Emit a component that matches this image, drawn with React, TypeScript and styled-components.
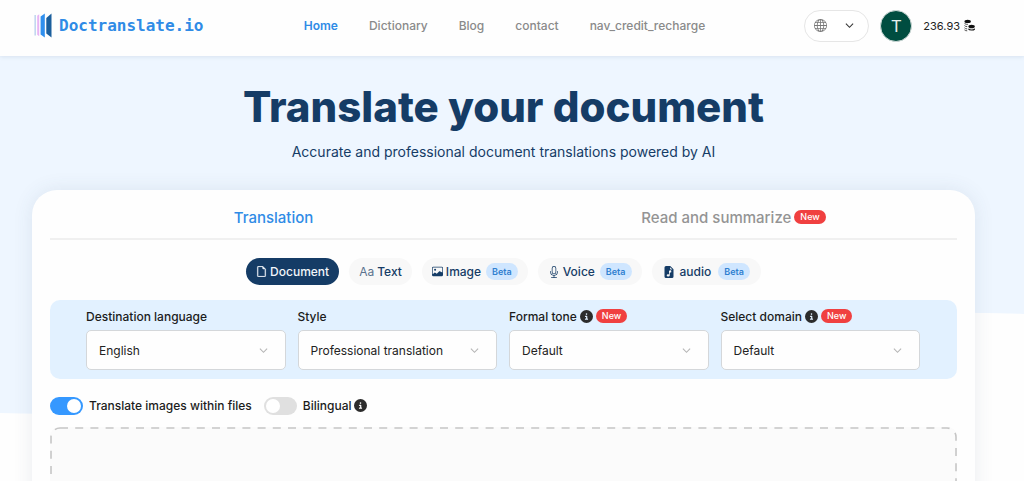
import React from "react";
import styled, { createGlobalStyle } from "styled-components";
import { BsFileEarmark, BsFileEarmarkMusicFill, BsGlobe, BsImage, BsMic } from "react-icons/bs";
import { FaCircleInfo } from "react-icons/fa6";

const GlobalStyle = createGlobalStyle`
  * { box-sizing: border-box; }
  body { margin: 0; background: #fefefe; font-family: Inter, "Liberation Sans", sans-serif; }
  button, select, input { font: inherit; color: inherit; margin: 0; }
`;

const Page = styled.div`
  position: relative;
  height: 100vh;
  overflow: hidden;
  isolation: isolate;
`;

const Wave = styled.svg`
  position: absolute;
  inset: 56px 0 auto;
  width: 100%;
  height: 358px;
  z-index: -1;
`;

const Header = styled.header`
  display: grid;
  grid-template-columns: 1fr auto 1fr;
  align-items: center;
  height: 56px;
  padding: 0 49px 5px 34px;
  background: #fefefe;
  box-shadow: 0 1px 4px rgba(60, 90, 130, 0.12);
`;

const Logo = styled.a`
  display: flex;
  align-items: center;
  gap: 7px;
  color: #2f8be6;
  font: bold 16px/24px "DejaVu Sans Mono", monospace;
  text-decoration: none;
`;

const Nav = styled.nav`
  display: flex;
  gap: 31px;
`;

const NavLink = styled.a<{ $active?: boolean }>`
  color: ${(p) => (p.$active ? "#2f8be6" : "#8a8a8a")};
  font-size: 12px;
  font-weight: ${(p) => (p.$active ? 600 : 500)};
  line-height: 20px;
  text-decoration: none;
`;

const Account = styled.div`
  display: flex;
  align-items: center;
  justify-content: flex-end;
  gap: 11px;
`;

const LanguageButton = styled.button`
  display: flex;
  align-items: center;
  justify-content: space-between;
  width: 65px;
  height: 32px;
  padding: 0 14px 0 9px;
  border: 1px solid #e6e6e6;
  border-radius: 16px;
  background: #fff;
  color: #777;

  > svg:last-child { color: #333; }
`;

const Avatar = styled.button`
  width: 32px;
  height: 32px;
  padding: 0;
  border: 1px solid #cfdad8;
  border-radius: 50%;
  background: #004d40;
  color: #e6f0ee;
  font: 17px/30px Roboto, sans-serif;
`;

const Credits = styled.span`
  display: flex;
  align-items: center;
  gap: 4px;
  color: #222;
  font-size: 11px;
  line-height: 16px;
`;

const Main = styled.main`
  padding: 0 49px 0 32px;
`;

const Title = styled.h1`
  margin: 24px 0 0;
  color: #153c66;
  font-size: 42px;
  font-weight: 800;
  line-height: 54px;
  text-align: center;
`;

const Subtitle = styled.p`
  margin: 8px 0 28px;
  color: #153c66;
  font-size: 14px;
  font-weight: 400;
  line-height: 20px;
  text-align: center;
`;

const Card = styled.section`
  padding: 8px 18px;
  border-radius: 25px;
  background: #fefefe;
  box-shadow: 0 0 20px rgba(60, 80, 110, 0.1);
`;

const Tabs = styled.div`
  display: grid;
  grid-template-columns: 1fr 1fr;
  gap: 13px;
  border-bottom: 2px solid #f0f0f0;
`;

const Tab = styled.button<{ $active?: boolean }>`
  display: flex;
  align-items: center;
  justify-content: center;
  gap: 3px;
  height: 40px;
  padding: 0 0 2px;
  border: 0;
  background: none;
  color: ${(p) => (p.$active ? "#2f8be6" : "#949494")};
  font-size: 15px;
  font-weight: 500;
`;

const NewBadge = styled.span`
  padding: 0 6px;
  border-radius: 7px;
  background: #f04040;
  color: #fff;
  font-size: 9px;
  font-weight: 500;
  line-height: 14px;
`;

const Modes = styled.div`
  display: flex;
  justify-content: center;
  gap: 10px;
  margin: 18px 0 15px;
`;

const Mode = styled.button<{ $active?: boolean; $roomy?: boolean }>`
  display: flex;
  align-items: center;
  gap: ${(p) => (p.$roomy ? 5 : 3)}px;
  height: 27px;
  padding: 0 ${(p) => (p.$roomy ? 11 : 10)}px;
  border: 0;
  border-radius: 14px;
  background: ${(p) => (p.$active ? "#153c66" : "#f8f8f8")};
  color: ${(p) => (p.$active ? "#f2f6fa" : "#153c66")};
  font-size: 12px;
  font-weight: 500;
`;

const Aa = styled.span`
  color: #5b738f;
  font-weight: 400;
`;

const BetaBadge = styled.span`
  margin-left: 2px;
  padding: 0 6px;
  border-radius: 9px;
  background: #cfe6ff;
  color: #2f80d0;
  font-size: 9px;
  font-weight: 600;
  line-height: 17px;
`;

const Options = styled.div`
  display: grid;
  grid-template-columns: repeat(4, 1fr);
  gap: 12px;
  padding: 8px 37px 9px 36px;
  border-radius: 10px;
  background: #e2f1ff;
`;

const FieldLabel = styled.div`
  display: flex;
  align-items: center;
  gap: 3px;
  height: 16px;
  margin-bottom: 6px;
  color: #1c1c1c;
  font-size: 12px;
  font-weight: 500;
`;

const SelectBox = styled.div`
  display: grid;
  align-items: center;

  > * { grid-area: 1 / 1; }
  > svg { justify-self: end; margin-right: 18px; color: #b5b5b5; pointer-events: none; }
`;

const Select = styled.select`
  appearance: none;
  width: 100%;
  height: 40px;
  padding: 0 36px 0 12px;
  border: 1px solid #d4d7da;
  border-radius: 5px;
  background: #fefefe;
  color: #222;
  font-size: 12px;
`;

const Toggles = styled.div`
  display: flex;
  align-items: center;
  gap: 12px;
  height: 19px;
  margin: 17px 0 12px;
`;

const ToggleLabel = styled.label`
  display: flex;
  align-items: center;
  gap: 6px;
  color: #1c1c1c;
  font-size: 12px;
  font-weight: 500;
`;

const Switch = styled.input`
  appearance: none;
  display: flex;
  align-items: center;
  width: 33px;
  height: 18px;
  padding: 0 2px;
  border-radius: 9px;
  background: #e0e0e0;

  &::before {
    content: "";
    width: 14px;
    height: 14px;
    border-radius: 50%;
    background: #fff;
  }
  &:checked { justify-content: flex-end; background: #3598ff; }
`;

const InfoIcon = styled(FaCircleInfo)`
  width: 13px;
  height: 13px;
  color: #2c2c2c;
`;

const LabelGroup = styled.span`
  display: flex;
  align-items: center;
  gap: 3px;
`;

const DropZone = styled.div`
  height: 240px;
  padding: 1px;
  border-radius: 9px;
  background: #fbfbfb;
`;

const DashedOutline = styled.svg`
  display: block;
  width: 100%;
  height: 100%;
  overflow: visible;
`;

function Chevron({ size = 9 }: { size?: number }) {
  return (
    <svg width={size} height={size} viewBox="0 0 10 10" fill="none" stroke="currentColor" strokeWidth="1.2" aria-hidden="true">
      <path d="M1 3l4 4 4-4" />
    </svg>
  );
}

function LogoMark() {
  return (
    <svg width="18" height="25" viewBox="0 0 18 25" aria-hidden="true">
      <path d="M0.500 2h1.300v20.500H.5z" fill="#b4cdec" />
      <path d="M3.200 2.800L5.200 1.200v22L3.200 21.800z" fill="#e8b4f4" />
      <path d="M6.600 3.500L10.800.5v24L6.600 21.500z" fill="#2f8fee" />
      <path d="M12.300 5L17.500.5v24l-5.200-4z" fill="#1b5f9d" />
    </svg>
  );
}

function Coins() {
  return (
    <svg width="11" height="13" viewBox="0 0 12 13" fill="none" aria-hidden="true">
      <ellipse cx="4" cy="2" rx="3.500" ry="1.700" fill="#111" />
      <path d="M.5 4c.6 1 2 1.400 3.800 1.200M.5 6.500c.5.800 1.600 1.200 3 1.200M.5 9c.5.800 1.600 1.200 3 1.200M.5 11.300c.5.600 1.600 1 3 1" stroke="#111" strokeWidth=".8" />
      <ellipse cx="8.300" cy="7.500" rx="3.500" ry="1.900" fill="#111" />
      <path d="M4.900 10c.8 1.900 6 1.900 6.800 0" stroke="#111" strokeWidth="1.300" />
    </svg>
  );
}

interface Field {
  id: string;
  label: string;
  value: string;
  isNew?: boolean;
}

const fields: Field[] = [
  { id: "language", label: "Destination language", value: "English" },
  { id: "style", label: "Style", value: "Professional translation" },
  { id: "tone", label: "Formal tone", value: "Default", isNew: true },
  { id: "domain", label: "Select domain", value: "Default", isNew: true },
];

const links = ["Home", "Dictionary", "Blog", "contact", "nav_credit_recharge"];

export default function App() {
  return (
    <>
      <GlobalStyle />
      <Page>
        <Wave viewBox="0 0 1024 358" preserveAspectRatio="none" aria-hidden="true">
          <path d="M0 0H1024V258C760 250 640 285 500 320S180 362 0 357z" fill="#eef6ff" />
        </Wave>
        <Header>
          <Logo href="#"><LogoMark />Doctranslate.io</Logo>
          <Nav>
            {links.map((name, i) => (
              <NavLink key={name} href="#" $active={i === 0}>{name}</NavLink>
            ))}
          </Nav>
          <Account>
            <LanguageButton aria-label="Language"><BsGlobe size={13} /><Chevron /></LanguageButton>
            <Avatar>T</Avatar>
            <Credits>236.93 <Coins /></Credits>
          </Account>
        </Header>
        <Main>
          <Title>Translate your document</Title>
          <Subtitle>Accurate and professional document translations powered by AI</Subtitle>
          <Card>
            <Tabs>
              <Tab $active>Translation</Tab>
              <Tab>Read and summarize <NewBadge>New</NewBadge></Tab>
            </Tabs>
            <Modes>
              <Mode $active><BsFileEarmark size={11} strokeWidth={0.6} />Document</Mode>
              <Mode><Aa>Aa</Aa>Text</Mode>
              <Mode><BsImage size={11} />Image <BetaBadge>Beta</BetaBadge></Mode>
              <Mode><BsMic size={12} />Voice <BetaBadge>Beta</BetaBadge></Mode>
              <Mode $roomy><BsFileEarmarkMusicFill size={12} />audio <BetaBadge>Beta</BetaBadge></Mode>
            </Modes>
            <Options>
              {fields.map((f) => (
                <div key={f.id}>
                  <FieldLabel>
                    <label htmlFor={f.id}>{f.label}</label>
                    {f.isNew && <><InfoIcon /><NewBadge>New</NewBadge></>}
                  </FieldLabel>
                  <SelectBox>
                    <Select id={f.id}><option>{f.value}</option></Select>
                    <Chevron />
                  </SelectBox>
                </div>
              ))}
            </Options>
            <Toggles>
              <ToggleLabel><Switch type="checkbox" defaultChecked />Translate images within files</ToggleLabel>
              <ToggleLabel><Switch type="checkbox" /><LabelGroup>Bilingual <InfoIcon /></LabelGroup></ToggleLabel>
            </Toggles>
            <DropZone>
              <DashedOutline aria-hidden="true">
                <rect width="100%" height="100%" rx="9" fill="none" stroke="#c6c6c6" strokeWidth="1.600" strokeDasharray="8 7.200" />
              </DashedOutline>
            </DropZone>
          </Card>
        </Main>
      </Page>
    </>
  );
}
